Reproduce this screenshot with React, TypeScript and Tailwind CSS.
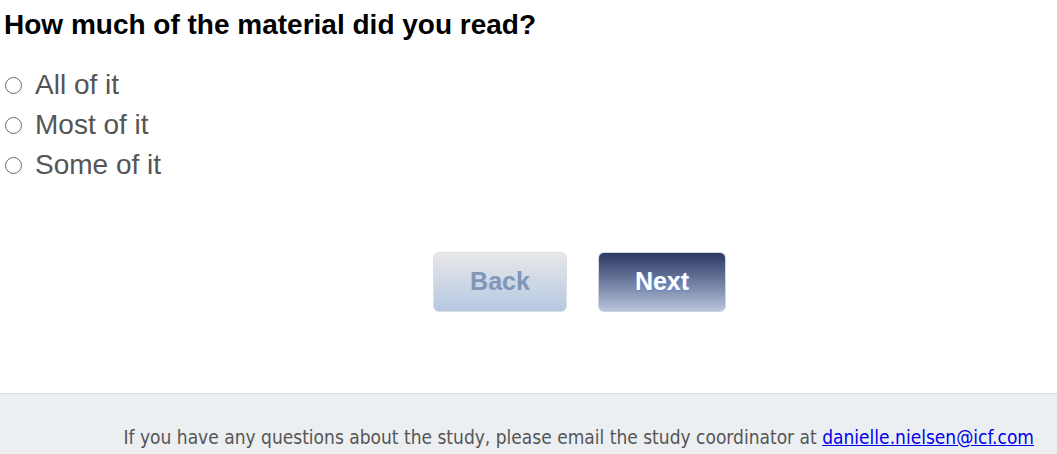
export default function App() {
  const options = ["All of it", "Most of it", "Some of it"];
  return (
    <div className="min-h-[454px] bg-white font-['Liberation_Sans',Arial,sans-serif] flex flex-col">
      <div className="px-1 pt-[8px]">
        <h1 className="text-[28px] leading-[34px] font-bold text-black">How much of the material did you read?</h1>
        <div className="mt-[23px] flex flex-col">
          {options.map((o) => (
            <label key={o} className="flex items-center h-[40px] text-[28px] text-[#555555]">
              <span className="shrink-0 ml-px mr-[13px] w-[17px] h-[17px] rounded-full border-[1.5px] border-[#6b6b6b] bg-white" />
              {o}
            </label>
          ))}
        </div>
      </div>
      <div className="mt-[67px] flex justify-center gap-[31px] pl-[102px]">
        <button className="w-[134px] h-[60px] rounded-[6px] border border-[#d8dde6] bg-gradient-to-b from-[#e8e8e8] to-[#b6c8e2] text-[25px] font-bold text-[#8196b7] [text-shadow:1px_1px_1px_#c8d4e8]">
          Back
        </button>
        <button className="w-[128px] h-[60px] rounded-[6px] border border-[#cfd5e0] bg-gradient-to-b from-[#2d3964] to-[#b9c5dd] text-[25px] font-bold text-white [text-shadow:1px_1px_1px_#5a8ad8]">
          Next
        </button>
      </div>
      <div className="mt-[81px] flex-1 border-t border-[#dcdfe3] bg-[#eceff2] pt-[29px] pr-[23px] text-right">
        <p className="text-[19px] leading-[28px] text-[#555555] font-['DejaVu_Sans_Condensed',Tahoma,sans-serif]">
          If you have any questions about the study, please email the study coordinator at{" "}
          <a href="#" className="text-[#0000ee] underline">danielle.nielsen@icf.com</a>
        </p>
      </div>
    </div>
  );
}
